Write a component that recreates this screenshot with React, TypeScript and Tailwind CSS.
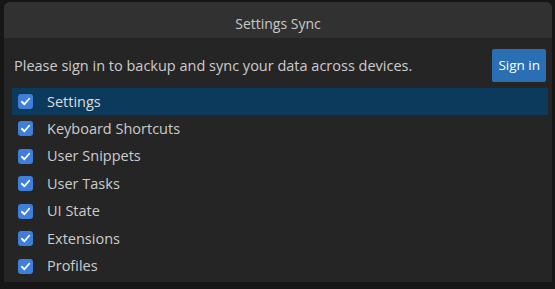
import React from 'react';

const items = [
  'Settings',
  'Keyboard Shortcuts',
  'User Snippets',
  'User Tasks',
  'UI State',
  'Extensions',
  'Profiles',
];

const Check = () => (
  <span className="flex h-[15px] w-[15px] items-center justify-center rounded-[3px] bg-[#3f7fdc]">
    <svg width="11" height="11" viewBox="0 0 12 12" fill="none">
      <path d="M2 6.3 4.8 9 10 3" stroke="white" strokeWidth="2" strokeLinecap="round" strokeLinejoin="round" />
    </svg>
  </span>
);

const App = () => {
  return (
    <div className="h-[289px] w-[555px] overflow-hidden bg-[#161616] pl-[4px] pr-[3px] pt-[2px] font-['Open_Sans',sans-serif] text-[#cccccc]">
      <div className="h-[280px] overflow-hidden rounded-t-[6px] bg-[#252526]">
        {/* Title */}
        <div className="flex h-[36px] items-center justify-center bg-[#313132] pt-[6px] text-[14px] text-[#c8c8c8]">
          Settings Sync
        </div>

        {/* Message */}
        <div className="flex h-[50px] items-center justify-between pl-[10px] pr-[6px] pt-[5px]">
          <span className="text-[14.5px]">Please sign in to backup and sync your data across devices.</span>
          <button className="h-[33px] rounded-[2px] bg-[#2a6fb3] px-[6px] text-[13.5px] text-white">Sign in</button>
        </div>

        {/* Items */}
        <div className="flex flex-col pl-[8px] pr-[4px]">
          {items.map((label, i) => (
            <div
              key={label}
              className={
                i === 0
                  ? 'flex h-[27px] items-center gap-[14px] bg-[#0b3a5d] pl-[6px] text-[14.5px] text-[#dddddd]'
                  : 'flex h-[27.5px] items-center gap-[14px] pl-[6px] text-[14.5px]'
              }
            >
              <Check />
              <span>{label}</span>
            </div>
          ))}
        </div>
      </div>
    </div>
  );
};

export default App;
